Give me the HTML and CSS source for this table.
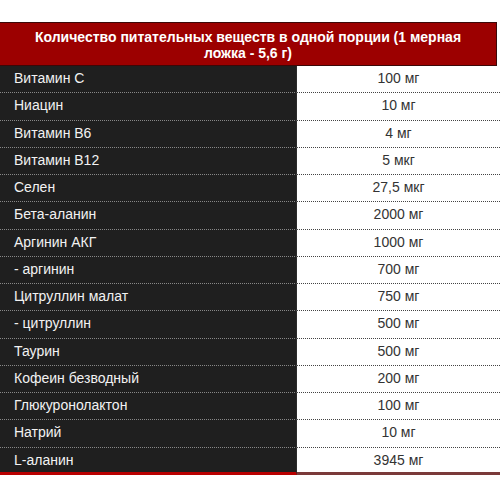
FILE: index.html
```html
<!DOCTYPE html>
<html lang="ru">
<head>
<meta charset="utf-8">
<link rel="stylesheet" href="styles.css">
</head>
<body>
<div class="table">
  <div class="head">Количество питательных веществ в одной порции (1 мерная ложка - 5,6 г)</div>
  <div class="row"><div class="name">Витамин С</div><div class="val">100 мг</div></div>
  <div class="row"><div class="name">Ниацин</div><div class="val">10 мг</div></div>
  <div class="row"><div class="name">Витамин В6</div><div class="val">4 мг</div></div>
  <div class="row"><div class="name">Витамин В12</div><div class="val">5 мкг</div></div>
  <div class="row"><div class="name">Селен</div><div class="val">27,5 мкг</div></div>
  <div class="row"><div class="name">Бета-аланин</div><div class="val">2000 мг</div></div>
  <div class="row"><div class="name">Аргинин АКГ</div><div class="val">1000 мг</div></div>
  <div class="row"><div class="name">- аргинин</div><div class="val">700 мг</div></div>
  <div class="row"><div class="name">Цитруллин малат</div><div class="val">750 мг</div></div>
  <div class="row"><div class="name">- цитруллин</div><div class="val">500 мг</div></div>
  <div class="row"><div class="name">Таурин</div><div class="val">500 мг</div></div>
  <div class="row"><div class="name">Кофеин безводный</div><div class="val">200 мг</div></div>
  <div class="row"><div class="name">Глюкуронолактон</div><div class="val">100 мг</div></div>
  <div class="row"><div class="name">Натрий</div><div class="val">10 мг</div></div>
  <div class="row last"><div class="name">L-аланин</div><div class="val">3945 мг</div></div>
</div>
</body>
</html>
```
FILE: styles.css
```css
html, body {
  margin: 0;
  padding: 0;
  background: #ffffff;
}
body {
  padding-top: 22px;
  font-family: "Liberation Sans", Arial, sans-serif;
}
.table {
  width: 500px;
}
.head {
  box-sizing: border-box;
  width: 497px;
  height: 44px;
  background: #9c0000;
  border: 1px solid #3c0808;
  border-left: none;
  color: #ffffff;
  font-weight: bold;
  font-size: 14px;
  line-height: 16px;
  text-align: center;
  padding: 6px 30px 0;
}
.row {
  display: grid;
  grid-template-columns: 297px 203px;
  height: 27.25px;
}
.name, .val {
  box-sizing: border-box;
  height: 100%;
  font-size: 14px;
  line-height: 25px;
  border-bottom: 1px dotted #888888;
}
.name {
  background: #1f1f1f;
  color: #f2f2f2;
  padding-left: 14px;
  border-right: 1px solid #2b2b2b;
}
.val {
  background: #ffffff;
  color: #333333;
  text-align: center;
  border-bottom-color: #444444;
}
.row.last {
  height: 27px;
}
.last .name, .last .val {
  line-height: 24px;
  border-bottom: 3px solid #b80000;
}
.last .val {
  border-bottom-color: #7a3a3a;
}
```
